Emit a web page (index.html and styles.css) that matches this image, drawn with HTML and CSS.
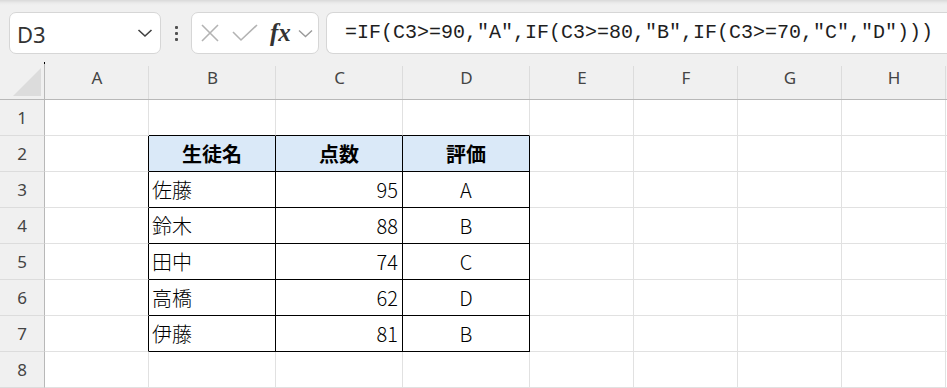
FILE: index.html
```html
<!DOCTYPE html>
<html lang="ja">
<head>
<meta charset="utf-8">
<link rel="stylesheet" href="styles.css">
</head>
<body>
<div class="toolbar">
  <div class="namebox">
    <span class="name">D3</span>
    <svg class="chev" width="16" height="10" viewBox="0 0 16 10"><path d="M1.5 2 L8 8 L14.5 2" fill="none" stroke="#404040" stroke-width="1.6"/></svg>
  </div>
  <div class="dots"><i></i><i></i><i></i></div>
  <div class="fxbox">
    <svg class="ico" width="20" height="20" viewBox="0 0 20 20"><path d="M2 2 L18 18 M18 2 L2 18" stroke="#b3b3b3" stroke-width="1.6" fill="none"/></svg>
    <svg class="ico" width="26" height="20" viewBox="0 0 26 20"><path d="M1 9 L9 17 L25 2" stroke="#b3b3b3" stroke-width="1.6" fill="none"/></svg>
    <span class="fx">fx</span>
    <svg class="chev2" width="15" height="9" viewBox="0 0 15 9"><path d="M1 1.5 L7.5 7.5 L14 1.5" fill="none" stroke="#9a9a9a" stroke-width="1.4"/></svg>
  </div>
  <div class="formula">=IF(C3&gt;=90,"A",IF(C3&gt;=80,"B",IF(C3&gt;=70,"C","D")))</div>
</div>

<div class="sheet">
  <div class="corner"><span class="tri"></span><span class="pix"></span></div>
  <div class="ch">A</div><div class="ch">B</div><div class="ch">C</div><div class="ch">D</div>
  <div class="ch">E</div><div class="ch">F</div><div class="ch">G</div><div class="ch">H</div><div class="ch end"></div>

  <div class="rh">1</div>
  <div class="c"></div><div class="c bb"></div><div class="c bb"></div><div class="c bb"></div>
  <div class="c"></div><div class="c"></div><div class="c"></div><div class="c"></div><div class="c end"></div>

  <div class="rh">2</div>
  <div class="c br"></div><div class="c t hd">生徒名</div><div class="c t hd">点数</div><div class="c t hd">評価</div>
  <div class="c"></div><div class="c"></div><div class="c"></div><div class="c"></div><div class="c end"></div>

  <div class="rh">3</div>
  <div class="c br"></div><div class="c t tx">佐藤</div><div class="c t num">95</div><div class="c t ctr">A</div>
  <div class="c"></div><div class="c"></div><div class="c"></div><div class="c"></div><div class="c end"></div>

  <div class="rh">4</div>
  <div class="c br"></div><div class="c t tx">鈴木</div><div class="c t num">88</div><div class="c t ctr">B</div>
  <div class="c"></div><div class="c"></div><div class="c"></div><div class="c"></div><div class="c end"></div>

  <div class="rh">5</div>
  <div class="c br"></div><div class="c t tx">田中</div><div class="c t num">74</div><div class="c t ctr">C</div>
  <div class="c"></div><div class="c"></div><div class="c"></div><div class="c"></div><div class="c end"></div>

  <div class="rh">6</div>
  <div class="c br"></div><div class="c t tx">高橋</div><div class="c t num">62</div><div class="c t ctr">D</div>
  <div class="c"></div><div class="c"></div><div class="c"></div><div class="c"></div><div class="c end"></div>

  <div class="rh">7</div>
  <div class="c br"></div><div class="c t tx">伊藤</div><div class="c t num">81</div><div class="c t ctr">B</div>
  <div class="c"></div><div class="c"></div><div class="c"></div><div class="c"></div><div class="c end"></div>

  <div class="rh">8</div>
  <div class="c"></div><div class="c"></div><div class="c"></div><div class="c"></div>
  <div class="c"></div><div class="c"></div><div class="c"></div><div class="c"></div><div class="c end"></div>
</div>
</body>
</html>
```

FILE: styles.css
```css
* { box-sizing: border-box; }
html, body { margin: 0; padding: 0; }
body {
  width: 947px;
  height: 388px;
  overflow: hidden;
  background: #ffffff;
  font-family: "Noto Sans", "Noto Sans CJK JP", sans-serif;
}

.toolbar {
  height: 62px;
  display: flex;
  align-items: flex-start;
  padding: 12px 0 0 9px;
  background: linear-gradient(#d9d9d9 0px, #ebebeb 3px, #f0f0f0 5px, #f0f0f0 100%);
}

.namebox {
  width: 152px;
  height: 42px;
  background: #fff;
  border: 1px solid #d6d6d6;
  border-radius: 7px;
  display: flex;
  align-items: center;
  justify-content: space-between;
  padding: 2px 7px 0 7px;
}
.name {
  font-family: "Noto Sans", sans-serif;
  font-size: 22px;
  color: #333;
  line-height: 1;
}
.chev { margin-right: 0; margin-top: -2px; }

.dots {
  width: 30px;
  height: 42px;
  display: flex;
  flex-direction: column;
  align-items: center;
  justify-content: center;
  gap: 3px;
}
.dots i {
  display: block;
  width: 3px;
  height: 3px;
  background: #505050;
  border-radius: 1px;
}

.fxbox {
  width: 128px;
  height: 42px;
  background: #fff;
  border: 1px solid #d6d6d6;
  border-radius: 7px;
  display: flex;
  align-items: center;
  padding: 0 0 0 8px;
}
.fxbox .ico { flex: none; margin-right: 12px; }
.fx {
  font-family: "Liberation Serif", serif;
  font-style: italic;
  font-weight: 700;
  font-size: 25px;
  color: #333;
  line-height: 1;
  margin-top: -2px;
}
.chev2 { margin-left: 7px; margin-top: 1px; }

.formula {
  flex: 1;
  margin-left: 7px;
  height: 42px;
  background: #fff;
  border: 1px solid #d6d6d6;
  border-right: none;
  border-radius: 7px 0 0 7px;
  font-family: "Liberation Mono", monospace;
  font-size: 20px;
  color: #1e1e1e;
  line-height: 40px;
  padding-left: 18px;
  white-space: nowrap;
  overflow: hidden;
}

.sheet {
  display: grid;
  grid-template-columns: 45px 104px 127px 127px 127px 104px 104px 104px 104px 1fr;
  grid-template-rows: 38px repeat(8, 36px);
}

.corner {
  position: relative;
  background: #f0f0f0;
  border-right: 1px solid #b8b8b8;
  border-bottom: 1px solid #b8b8b8;
}
.tri {
  position: absolute;
  left: 13px;
  top: 6px;
  width: 0;
  height: 0;
  border-style: solid;
  border-width: 0 0 28px 28px;
  border-color: transparent transparent #dcdcdc transparent;
}
.pix {
  position: absolute;
  left: 44px;
  top: 0;
  width: 1px;
  height: 2px;
  background: #000;
}

.ch {
  background: #f0f0f0 linear-gradient(#dcdcdc, #dcdcdc) right bottom / 1px 33px no-repeat;
  border-bottom: 1px solid #b8b8b8;
  font-size: 17px;
  color: #444;
  display: flex;
  align-items: center;
  justify-content: center;
  padding-bottom: 6px;
}
.ch.end { background: #f0f0f0; }

.rh {
  background: #f0f0f0;
  border-right: 1px solid #b8b8b8;
  border-bottom: 1px solid #dcdcdc;
  font-size: 17px;
  color: #444;
  display: flex;
  align-items: center;
  justify-content: center;
  padding-bottom: 1px;
}

.c {
  border-right: 1px solid #e1e1e1;
  border-bottom: 1px solid #e1e1e1;
  font-family: "Noto Sans CJK JP", sans-serif;
  font-size: 20px;
  font-weight: 300;
  color: #000;
  display: flex;
  align-items: center;
  white-space: nowrap;
}
.c.end { border-right: none; }
.c.br { border-right-color: #000; }
.c.bb { border-bottom-color: #000; }
.c.t { border-right-color: #000; border-bottom-color: #000; }
.hd {
  background: #dae9f8;
  font-weight: 700;
  justify-content: center;
}
.tx { padding-left: 3px; }
.num { justify-content: flex-end; padding-right: 4px; }
.ctr { justify-content: center; }
```
